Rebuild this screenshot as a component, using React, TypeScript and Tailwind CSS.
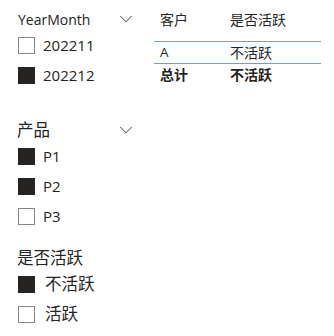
import { ChevronDown } from "lucide-react";

type Item = { label: string; checked: boolean; cjk?: boolean };

const font = { fontFamily: '"Segoe UI", "Open Sans", "Noto Sans CJK SC", sans-serif' };

function Slicer({
  title,
  cjkTitle,
  items,
  chevron,
  className,
}: {
  title: string;
  cjkTitle?: boolean;
  items: Item[];
  chevron?: boolean;
  className?: string;
}) {
  return (
    <div className={className}>
      <div className="flex h-[22px] items-center justify-between pr-[3px]">
        <span className={cjkTitle ? "-ml-[1px] text-[16.5px] text-[#252423]" : "text-[14px] text-[#252423]"}>{title}</span>
        {chevron && <ChevronDown className="h-[22px] w-[22px] text-[#605e5c]" strokeWidth={1.1} />}
      </div>
      {items.map((item) => (
        <div key={item.label} className="flex h-[30px] items-center gap-[8px]">
          <span
            className={
              item.checked
                ? "h-[17px] w-[17px] shrink-0 border border-[#252423] bg-[#252423]"
                : "h-[17px] w-[17px] shrink-0 border border-[#8a8886] bg-white"
            }
          />
          <span className={item.cjk ? "ml-[2px] text-[16.5px] text-[#252423]" : "text-[15px] text-[#252423]"}>
            {item.label}
          </span>
        </div>
      ))}
    </div>
  );
}

export default function App() {
  return (
    <div className="flex h-[336px] w-[334px] bg-white" style={font}>
      <div className="w-[140px] shrink-0 pl-[18px] pt-[8px]">
        <Slicer
          title="YearMonth"
          chevron
          items={[
            { label: "202211", checked: false },
            { label: "202212", checked: true },
          ]}
        />
        <Slicer
          title="产品"
          cjkTitle
          chevron
          className="mt-[29px]"
          items={[
            { label: "P1", checked: true },
            { label: "P2", checked: true },
            { label: "P3", checked: false },
          ]}
        />
        <Slicer
          title="是否活跃"
          cjkTitle
          className="mt-[16px]"
          items={[
            { label: "不活跃", checked: true, cjk: true },
            { label: "活跃", checked: false, cjk: true },
          ]}
        />
      </div>
      <div className="ml-[14px] w-[167px] pt-[8px] text-[14px] text-[#252423]">
        <div className="flex h-[34px] items-start border-b border-[#5ea2e8] pl-[6px] pt-[1px]">
          <span className="w-[70px]">客户</span>
          <span>是否活跃</span>
        </div>
        <div className="flex h-[22px] items-center border-b border-[#5ea2e8] pl-[6px]">
          <span className="w-[70px] text-[13.5px]">A</span>
          <span>不活跃</span>
        </div>
        <div className="flex h-[20px] items-center pl-[6px] font-bold">
          <span className="w-[70px]">总计</span>
          <span>不活跃</span>
        </div>
      </div>
    </div>
  );
}
